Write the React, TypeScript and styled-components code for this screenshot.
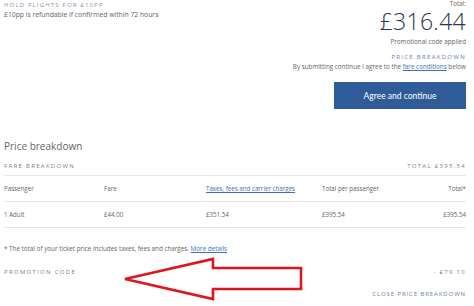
import React from 'react';
import styled, { createGlobalStyle } from 'styled-components';

const GlobalStyle = createGlobalStyle`
    body {
        margin: 0;
        background: #FFFFFF;
        font-family: "Open Sans", "Liberation Sans", sans-serif;
    }
`;

const Page = styled.div`
    position: relative;
    width: 474px;
    height: 306px;
    box-sizing: border-box;
    padding: 0 8px 0 4px;
    overflow: hidden;
    color: #666666;
`;
const Header = styled.div`
    display: flex;
    justify-content: space-between;
    align-items: flex-start;
`;
const HoldBlock = styled.div`
    display: flex;
    flex-direction: column;
`;
const Caps = styled.div<{tone?: string, spacing?: number}>`
    font-size: 6px;
    line-height: 10px;
    letter-spacing: ${props=>props.spacing ?? 1.3}px;
    text-transform: uppercase;
    color: ${props=>props.tone || '#808080'};
    white-space: nowrap;
`;
const Small = styled.div<{size?: number}>`
    font-size: ${props=>props.size || 6.3}px;
    line-height: 10px;
    color: #666666;
    white-space: nowrap;
`;
const TotalBlock = styled.div`
    display: flex;
    flex-direction: column;
    align-items: flex-end;
`;
const Amount = styled.div`
    font-size: 23px;
    line-height: 26px;
    font-weight: 300;
    color: #2a3650;
    letter-spacing: 0.3px;
`;
const Link = styled.span`
    color: #3f6fc0;
    text-decoration: underline;
`;
const AgreeButton = styled.button`
    margin-top: 10px;
    width: 132px;
    height: 27px;
    border: none;
    background: #2f5b98;
    color: #FFFFFF;
    font-family: "Lato", "Open Sans", sans-serif;
    font-size: 8.5px;
    padding: 0;
`;
const Heading = styled.h2`
    margin: 29px 0 0 0;
    font-size: 10px;
    line-height: 16px;
    font-weight: 400;
    color: #666666;
`;
const SummaryRow = styled.div`
    margin-top: 7px;
    padding-bottom: 4px;
    display: flex;
    justify-content: space-between;
    border-bottom: 1px solid #e8e8e8;
`;
const Row = styled.div`
    display: grid;
    grid-template-columns: 100px 102px 116px 1fr auto;
    align-items: center;
    height: 25px;
    border-bottom: 1px solid #e8e8e8;
    font-size: 6.2px;
    color: #666666;
`;
const Cell = styled.div<{right?: boolean}>`
    text-align: ${props=>props.right ? 'right' : 'left'};
    white-space: nowrap;
`;
const Footnote = styled.div`
    margin-top: 16px;
    font-size: 6.3px;
    line-height: 10px;
    color: #666666;
    white-space: nowrap;
`;
const PromoRow = styled.div`
    margin-top: 13px;
    display: flex;
    justify-content: space-between;
    align-items: center;
`;
const CloseRow = styled.div`
    margin-top: 12px;
    display: flex;
    justify-content: flex-end;
`;
const Arrow = styled.svg`
    position: absolute;
    left: 0;
    top: 0;
    width: 474px;
    height: 306px;
    pointer-events: none;
`;

const header = ['Passenger', 'Fare', 'Taxes, fees and carrier charges', 'Total per passenger', 'Total*'];
const values = ['1 Adult', '£44.00', '£351.54', '£395.54', '£395.54'];

const App = () => {
    return (
        <Page>
            <GlobalStyle />
            <Header>
                <HoldBlock>
                    <Caps tone="#8593b0" spacing={1.2}>Hold flights for £10pp</Caps>
                    <Small size={6.8}>£10pp is refundable if confirmed within 72 hours</Small>
                </HoldBlock>
                <TotalBlock>
                    <Small style={{lineHeight: '8px'}}>Total:</Small>
                    <Amount>£316.44</Amount>
                    <Small style={{marginTop: 3}}>Promotional code applied</Small>
                    <Caps tone="#6a7fa8" style={{marginTop: 5}}>Price breakdown</Caps>
                    <Small>By submitting continue I agree to the <Link>fare conditions</Link> below</Small>
                    <AgreeButton>Agree and continue</AgreeButton>
                </TotalBlock>
            </Header>
            <Heading>Price breakdown</Heading>
            <SummaryRow>
                <Caps>Fare breakdown</Caps>
                <Caps>Total £395.54</Caps>
            </SummaryRow>
            <Row>
                {header.map((h, i)=>(
                    <Cell key={h} right={i===4}>{i===2 ? <Link>{h}</Link> : h}</Cell>
                ))}
            </Row>
            <Row>
                {values.map((v, i)=><Cell key={i} right={i===4}>{v}</Cell>)}
            </Row>
            <Footnote>* The total of your ticket price includes taxes, fees and charges. <Link>More details</Link></Footnote>
            <PromoRow>
                <Caps>Promotion code</Caps>
                <Caps>- £79.10</Caps>
            </PromoRow>
            <CloseRow>
                <Caps tone="#6a7fa8" spacing={0.9}>Close price breakdown</Caps>
            </CloseRow>
            <Arrow viewBox="0 0 474 306">
                <polygon
                    points="125,279 213,259 213,268 301,268 301,289 213,289 213,299"
                    fill="none"
                    stroke="#e0141e"
                    strokeWidth="2.6"
                    strokeLinejoin="miter"
                />
            </Arrow>
        </Page>
    );
}
export default App;
